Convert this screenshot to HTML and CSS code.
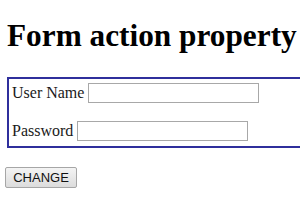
FILE: index.html
```html
<!DOCTYPE html>
<html>
<head>
<meta charset="utf-8">
<link rel="stylesheet" href="styles.css">
</head>
<body>
<h1 class="title">Form action property</h1>
<form class="login" action="#">
  <div class="row"><label class="lbl">User Name</label><input class="field" type="text"></div>
  <div class="row"><label class="lbl">Password</label><input class="field" type="password"></div>
</form>
<div class="actions"><button class="btn" type="button">CHANGE</button></div>
</body>
</html>
```
FILE: styles.css
```css
html { overflow: hidden; background: #fff; }
body {
  margin: 0;
  padding: 17px 0 0 0;
  font-family: "Liberation Serif", "Times New Roman", serif;
  color: #111;
}
.title {
  margin: 0 0 23px 7px;
  font-size: 31.3px;
  line-height: 37px;
  font-weight: bold;
  color: #000;
  white-space: nowrap;
}
.login {
  margin: 0 0 0 7px;
  width: 330px;
  box-sizing: border-box;
  border: 2px solid #2f2f9c;
  padding: 4px 3px 5px 3px;
  display: flex;
  flex-direction: column;
  gap: 18px;
}
.row {
  display: flex;
  align-items: center;
  gap: 4px;
  height: 20px;
}
.lbl {
  font-size: 16px;
  line-height: 18px;
  color: #1a1a1a;
}
.field {
  width: 171px;
  height: 20px;
  box-sizing: border-box;
  margin: 0;
  border: 1px solid #a8a8a8;
  background: #fff;
  padding: 0 2px;
}
.actions {
  margin: 19px 0 0 5px;
}
.btn {
  width: 72px;
  height: 21px;
  box-sizing: border-box;
  margin: 0;
  padding: 0;
  font-family: "Liberation Sans", Arial, sans-serif;
  font-size: 13px;
  color: #111;
  border: 1px solid #a6a6a6;
  border-radius: 2px;
  background: linear-gradient(#f4f4f4, #dcdcdc);
}
```
